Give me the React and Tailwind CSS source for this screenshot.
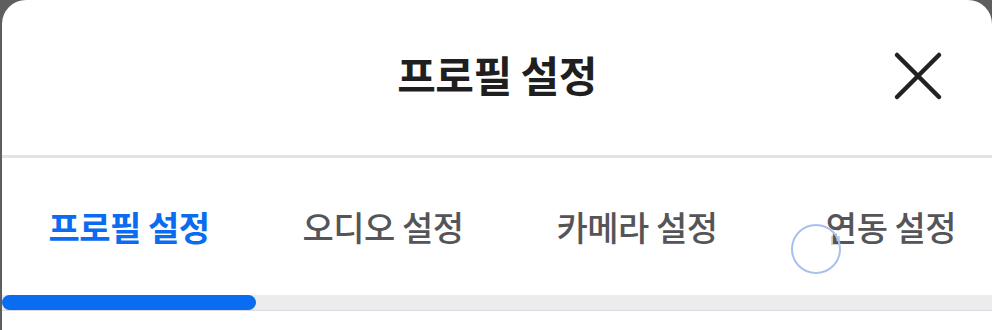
import React, { useState } from 'react';

const tabs = ['프로필 설정', '오디오 설정', '카메라 설정', '연동 설정'];

export default function App() {
  const [active, setActive] = useState(0);

  return (
    <div
      className="w-[992px] h-[330px] bg-[#5e5e5e] overflow-hidden"
      style={{ fontFamily: '"Noto Sans CJK KR", "Noto Sans", sans-serif' }}
    >
      <div className="relative ml-[2px] h-full bg-white rounded-t-[24px] overflow-hidden">
        {/* Header */}
        <div className="h-[155px] flex items-center pl-[254px] pr-[48px]">
          <h1 className="flex-1 text-center text-[42px] font-bold text-[#1f1f1f] tracking-[-0.5px] -mt-[8px]">프로필 설정</h1>
          <button className="w-[206px] h-[56px] flex items-center justify-end -mt-[4px]">
            <svg width="52" height="52" viewBox="0 0 52 52" fill="none">
              <path d="M5 5 L47 47 M47 5 L5 47" stroke="#222" strokeWidth="4.5" strokeLinecap="round" />
            </svg>
          </button>
        </div>
        <div className="h-[3px] bg-[#e3e3e5]" />

        {/* Tabs */}
        <div className="relative flex h-[137px] items-center">
          {tabs.map((t, i) => (
            <button
              key={t}
              onClick={() => setActive(i)}
              className={
                'relative z-10 shrink-0 w-[254px] text-[34px] tracking-[-0.5px] ' +
                (i === active ? 'text-[#0a6cf0] font-semibold' : 'text-[#555558] font-medium')
              }
            >
              {t}
            </button>
          ))}
          {/* touch indicator */}
          <div className="absolute left-[829px] top-[78px] w-[9px] h-[9px] bg-[#d4d4d4]" />
          <div className="absolute left-[789px] top-[66px] z-20 w-[50px] h-[50px] rounded-full border-2 border-[#a9c1ef]" />
        </div>

        {/* Progress track */}
        <div className="h-[16px] bg-[#ececef] border-b border-[#dcdce0]">
          <div className="h-[15px] w-[254px] rounded-full bg-[#0a6cf0]" />
        </div>
      </div>
    </div>
  );
}
